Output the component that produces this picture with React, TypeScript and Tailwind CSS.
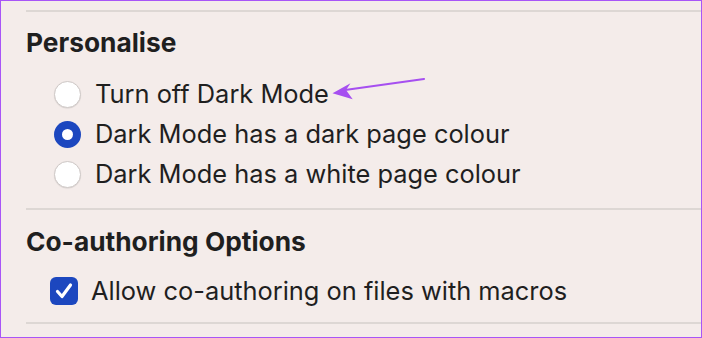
const options = [
  { id: "off", label: "Turn off Dark Mode", checked: false },
  { id: "dark", label: "Dark Mode has a dark page colour", checked: true },
  { id: "white", label: "Dark Mode has a white page colour", checked: false },
];

const Radio = ({ checked }: { checked: boolean }) =>
  checked ? (
    <span className="flex h-[27px] w-[27px] shrink-0 items-center justify-center rounded-full bg-[#1c47bf]">
      <span className="h-[11px] w-[11px] rounded-full bg-white" />
    </span>
  ) : (
    <span className="h-[27px] w-[27px] shrink-0 rounded-full border border-[#cfc9c7] bg-white shadow-[0_0.5px_1px_rgba(0,0,0,0.12)]" />
  );

export default function App() {
  return (
    <div
      className="relative h-[338px] w-[702px] overflow-hidden border border-[#a855f7] bg-[#f4ecea] text-[#1f1f1f]"
      style={{ fontFamily: "Inter, 'Liberation Sans', sans-serif" }}
    >
      <div className="pl-[25px]">
        <div className="mt-[9px] h-[2px] bg-[#ddd7d4]" />
        <h2 className="mt-[16px] text-[26.3px] font-bold leading-[30px]">Personalise</h2>
        <div className="mt-[16px] pl-[28px]">
          {options.map((o) => (
            <div key={o.id} className="flex h-[40px] items-center gap-[14px]">
              <Radio checked={o.checked} />
              <span className="text-[25.4px] leading-[40px]">{o.label}</span>
            </div>
          ))}
        </div>
        <div className="mt-[14px] h-[2px] bg-[#ddd7d4]" />
        <h2 className="mt-[17px] text-[26.3px] font-bold leading-[30px]">Co-authoring Options</h2>
        <div className="mt-[14px] flex h-[40px] items-center gap-[13px] pl-[24px]">
          <span className="flex h-[28px] w-[28px] shrink-0 items-center justify-center rounded-[6px] bg-[#1c47bf]">
            <svg width="20" height="20" viewBox="0 0 20 20" fill="none">
              <path d="M3.5 10.5l4.5 5L16.5 4" stroke="white" strokeWidth="3.2" strokeLinecap="round" strokeLinejoin="round" />
            </svg>
          </span>
          <span className="text-[25.4px] leading-[40px]">Allow co-authoring on files with macros</span>
        </div>
        <div className="mt-[11px] h-[2px] bg-[#ddd7d4]" />
      </div>
      <svg className="absolute left-0 top-0" width="702" height="338" viewBox="0 0 702 338" fill="none">
        <path d="M423 78 L344 89" stroke="#a64ff0" strokeWidth="2.2" strokeLinecap="round" />
        <path d="M331.5 92.3 L349.5 82.3 L345 89 L351.7 98.3 Z" fill="#a64ff0" />
      </svg>
    </div>
  );
}
